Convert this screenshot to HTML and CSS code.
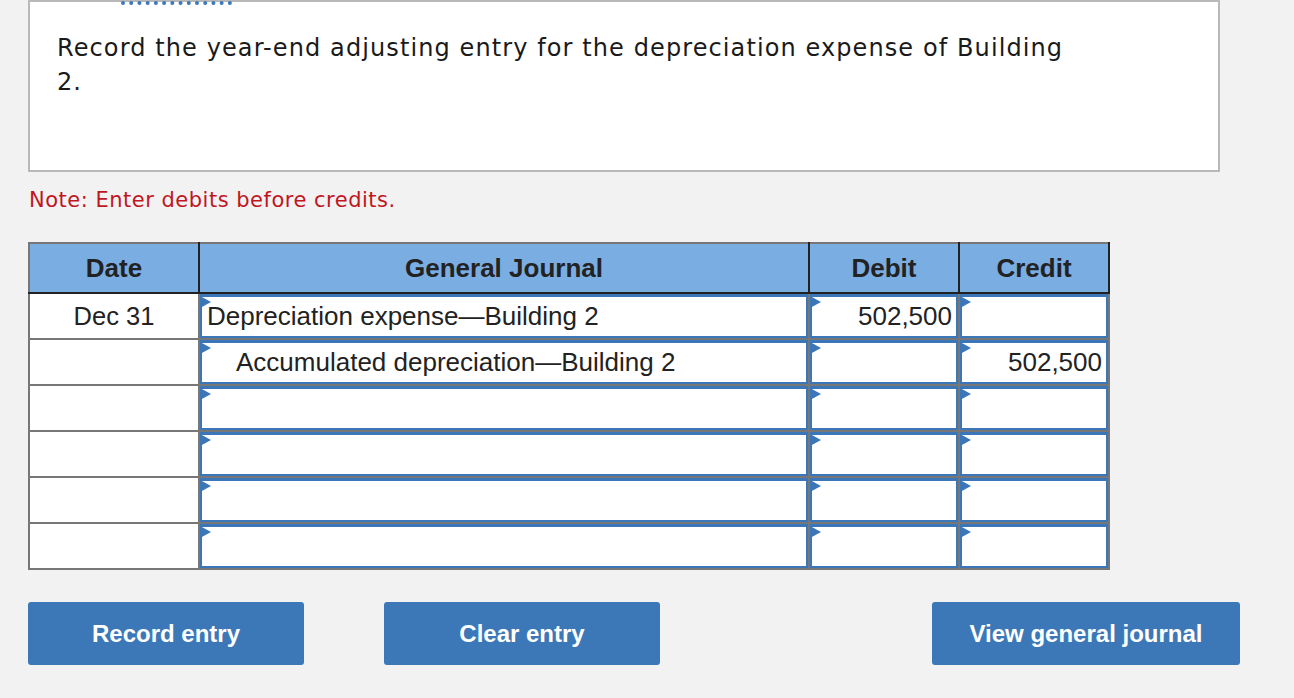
FILE: index.html
```html
<!DOCTYPE html>
<html lang="en">
    <head>
        <meta charset="UTF-8">
        <meta name="viewport" content="width=device-width, initial-scale=1.0">
        <title>Journal entry</title>
        <link rel="stylesheet" href="styles.css">
    </head>
    <body>
        <div class="page">
            <div class="question-box">
                <span class="tab-mark"></span>
                <p class="question-text">Record the year-end adjusting entry for the depreciation expense of Building 2.</p>
            </div>

            <p class="note">Note: Enter debits before credits.</p>

            <table class="journal">
                <colgroup>
                    <col class="col-date">
                    <col class="col-account">
                    <col class="col-amount">
                    <col class="col-amount">
                </colgroup>
                <thead>
                    <tr>
                        <th>Date</th>
                        <th>General Journal</th>
                        <th>Debit</th>
                        <th>Credit</th>
                    </tr>
                </thead>
                <tbody>
                    <tr>
                        <td class="date-cell">Dec 31</td>
                        <td><div class="field"><input type="text" class="entry" value="Depreciation expense&mdash;Building 2"></div></td>
                        <td><div class="field"><input type="text" class="entry amount" value="502,500"></div></td>
                        <td><div class="field"><input type="text" class="entry amount" value=""></div></td>
                    </tr>
                    <tr>
                        <td class="date-cell"></td>
                        <td><div class="field"><input type="text" class="entry indent" value="Accumulated depreciation&mdash;Building 2"></div></td>
                        <td><div class="field"><input type="text" class="entry amount" value=""></div></td>
                        <td><div class="field"><input type="text" class="entry amount" value="502,500"></div></td>
                    </tr>
                    <tr>
                        <td class="date-cell"></td>
                        <td><div class="field"><input type="text" class="entry"></div></td>
                        <td><div class="field"><input type="text" class="entry amount"></div></td>
                        <td><div class="field"><input type="text" class="entry amount"></div></td>
                    </tr>
                    <tr>
                        <td class="date-cell"></td>
                        <td><div class="field"><input type="text" class="entry"></div></td>
                        <td><div class="field"><input type="text" class="entry amount"></div></td>
                        <td><div class="field"><input type="text" class="entry amount"></div></td>
                    </tr>
                    <tr>
                        <td class="date-cell"></td>
                        <td><div class="field"><input type="text" class="entry"></div></td>
                        <td><div class="field"><input type="text" class="entry amount"></div></td>
                        <td><div class="field"><input type="text" class="entry amount"></div></td>
                    </tr>
                    <tr>
                        <td class="date-cell"></td>
                        <td><div class="field"><input type="text" class="entry"></div></td>
                        <td><div class="field"><input type="text" class="entry amount"></div></td>
                        <td><div class="field"><input type="text" class="entry amount"></div></td>
                    </tr>
                </tbody>
            </table>

            <div class="button-row">
                <button class="action-btn btn-record" type="button">Record entry</button>
                <button class="action-btn btn-clear" type="button">Clear entry</button>
                <button class="action-btn btn-view" type="button">View general journal</button>
            </div>
        </div>
    </body>
</html>
```

FILE: styles.css
```css
*{
    margin: 0px;
    padding: 0px;
    box-sizing: border-box;
}
body{
    background-color: #f2f2f2;
    font-family: "Liberation Sans", Arial, sans-serif;
    color: #222;
}
.page{
    padding: 0 0 0 28px;
    width: 1240px;
}
.question-box{
    position: relative;
    width: 1192px;
    height: 172px;
    background-color: white;
    border: 2px solid #b9b9b9;
    padding: 29px 0 0 27px;
}
.tab-mark{
    position: absolute;
    top: -1px;
    left: 91px;
    width: 111px;
    border-top: 4px dotted #3b78b8;
}
.question-text{
    font-family: "DejaVu Sans", Verdana, sans-serif;
    font-size: 24px;
    letter-spacing: 1.1px;
    line-height: 34px;
    color: #1a1a1a;
    max-width: 1030px;
}
.note{
    font-family: "DejaVu Sans", Verdana, sans-serif;
    font-size: 21px;
    letter-spacing: 0.5px;
    color: #c0161e;
    margin: 16px 0 0 1px;
    line-height: 24px;
}
.journal{
    margin-top: 30px;
    border-collapse: collapse;
    table-layout: fixed;
    width: 1082px;
    background-color: white;
    border: 2px solid #777;
}
.col-date{
    width: 170px;
}
.col-account{
    width: 610px;
}
.col-amount{
    width: 150px;
}
.journal th{
    background-color: #7aade2;
    height: 50px;
    font-size: 26px;
    font-weight: bold;
    color: #222;
    border: 2px solid #222;
    border-top: 2px solid #777;
    text-align: center;
}
.journal th:first-child{
    border-left: 2px solid #777;
}
.journal td{
    border: 2px solid #777;
    height: 44px;
    padding: 0;
}
.journal tbody tr:first-child td{
    border-top: 2px solid #222;
}
.date-cell{
    text-align: center;
    font-size: 25.5px;
    background-color: white;
}
.field{
    position: relative;
    height: 44px;
}
.field::before{
    content: "";
    position: absolute;
    top: 2px;
    left: 0;
    border-left: 11px solid #3a76b8;
    border-top: 6.5px solid transparent;
    border-bottom: 6.5px solid transparent;
}
.entry{
    display: block;
    width: 100%;
    height: 44px;
    border: 2px solid #3a76b8;
    border-top-width: 3px;
    outline: none;
    background-color: white;
    font-family: "Liberation Sans", Arial, sans-serif;
    font-size: 26px;
    color: #222;
    padding: 0 4px 0 5px;
}
.indent{
    padding-left: 34px;
}
.amount{
    text-align: right;
}
.button-row{
    display: flex;
    gap: 80px;
    margin-top: 32px;
    width: 1212px;
}
.action-btn{
    height: 63px;
    width: 276px;
    border: none;
    border-radius: 3px;
    background-color: #3c78b8;
    color: white;
    font-family: "Liberation Sans", Arial, sans-serif;
    font-size: 24px;
    font-weight: bold;
    cursor: pointer;
}
.btn-view{
    width: 308px;
    margin-left: auto;
}
```
